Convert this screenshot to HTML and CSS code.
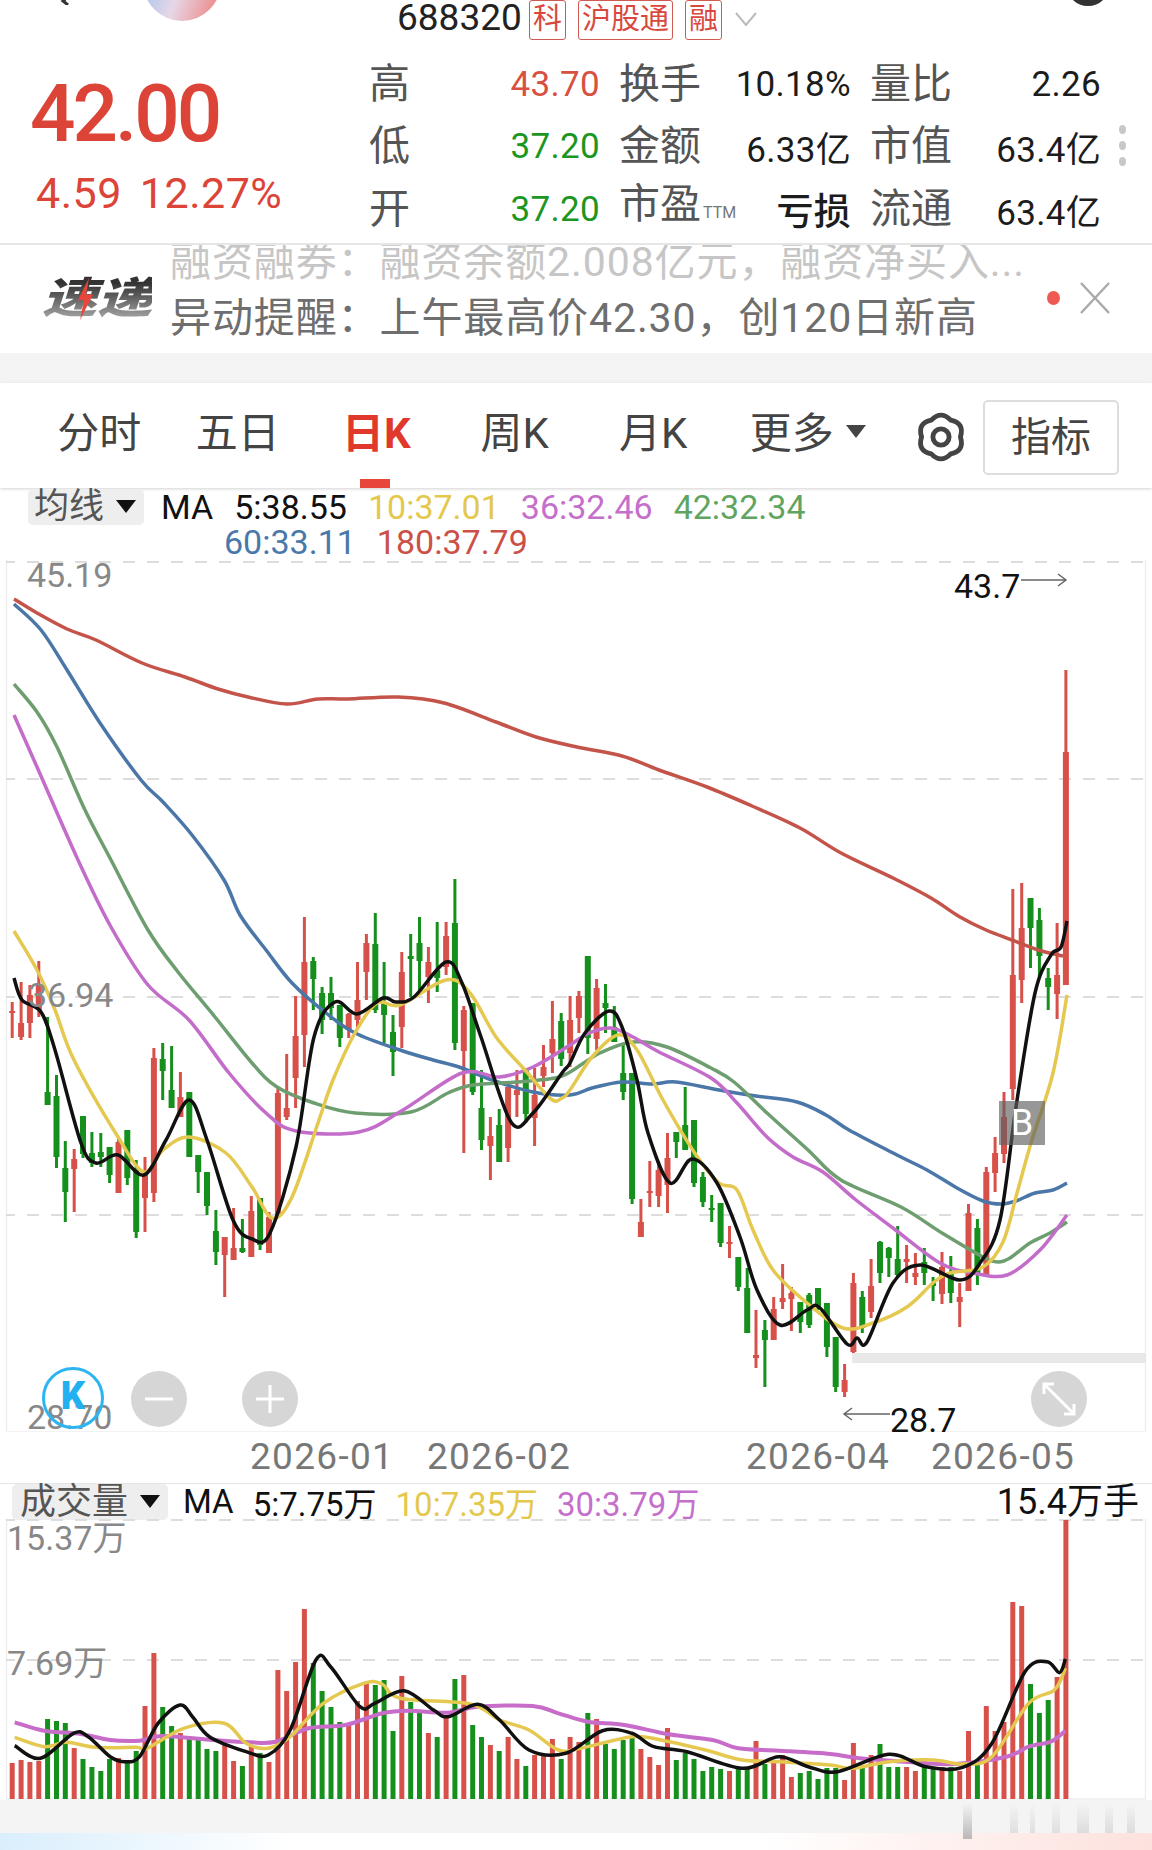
FILE: index.html
```html
<!DOCTYPE html>
<html lang="zh-CN">
<head>
<meta charset="utf-8">
<title>688320</title>
<link rel="stylesheet" href="styles.css">
</head>
<body>
<div id="page">

    <!-- top bar, cut by the edge of the picture -->
    <div class="topbar">
        <svg class="back" width="18" height="6" viewBox="0 0 18 6"><path d="M15 -8L3 2l5 4" fill="none" stroke="#333" stroke-width="3"/></svg>
        <div class="avatar"></div>
        <span class="code">688320</span>
        <span class="tag">科</span>
        <span class="tag">沪股通</span>
        <span class="tag">融</span>
        <svg class="chevron" width="24" height="14" viewBox="0 0 24 14"><path d="M2 1l10 12L22 1" fill="none" stroke="#bbb" stroke-width="2"/></svg>
        <div class="search"></div>
    </div>

    <div class="quote">
        <div class="price">
            <div class="last">42.00</div>
            <div class="change"><span>4.59</span><span>12.27%</span></div>
        </div>
        <div class="stats">
            <div class="stat"><span class="label">高</span><span class="val up">43.70</span></div>
            <div class="stat"><span class="label">换手</span><span class="val">10.18%</span></div>
            <div class="stat"><span class="label">量比</span><span class="val">2.26</span></div>
            <div class="stat"><span class="label">低</span><span class="val down">37.20</span></div>
            <div class="stat"><span class="label">金额</span><span class="val">6.33亿</span></div>
            <div class="stat"><span class="label">市值</span><span class="val">63.4亿</span></div>
            <div class="stat"><span class="label">开</span><span class="val down">37.20</span></div>
            <div class="stat"><span class="label">市盈<small>TTM</small></span><span class="val loss">亏损</span></div>
            <div class="stat"><span class="label">流通</span><span class="val">63.4亿</span></div>
        </div>
        <div class="dots"><i></i><i></i><i></i></div>
    </div>

    <div class="ticker">
        <div class="logo">
            <span>速递</span>
            <svg class="bolt" width="20" height="42" viewBox="0 0 20 46" preserveAspectRatio="none"><path d="M14 0L3 24h6L5 46l13-28h-7z" fill="#e8463a"/></svg>
        </div>
        <div class="news">
            <div class="news-old">融资融券：融资余额2.008亿元，融资净买入...</div>
            <div class="news-new">异动提醒：上午最高价42.30，创120日新高</div>
        </div>
        <i class="red-dot"></i>
        <svg class="close" width="32" height="32" viewBox="0 0 32 32"><path d="M2 1l28 30M30 1L2 31" fill="none" stroke="#aaa" stroke-width="2.5"/></svg>
    </div>

    <div class="gap"></div>

    <div class="tabs">
        <div class="tab">分时</div>
        <div class="tab">五日</div>
        <div class="tab active">日K</div>
        <div class="tab">周K</div>
        <div class="tab">月K</div>
        <div class="tab">更多<i class="caret"></i></div>
        <svg class="gear" width="54" height="54" viewBox="0 0 50 50">
            <path d="M16 9.4Q25 0 34 9.4Q47 12 43 25Q47 38 34 40.6Q25 50 16 40.6Q3 38 7 25Q3 12 16 9.4z" fill="none" stroke="#444" stroke-width="4.5" stroke-linejoin="round"/>
            <circle cx="25" cy="25" r="7.5" fill="none" stroke="#444" stroke-width="4.5"/>
        </svg>
        <div class="btn">指标</div>
    </div>

    <!-- price chart -->
    <div class="panel">
        <div class="legend">
            <div class="legend-row">
                <span class="chip">均线<i class="caret black"></i></span>
                <span>MA</span>
                <span>5:38.55</span>
                <span class="c-gold">10:37.01</span>
                <span class="c-purple">36:32.46</span>
                <span class="c-green">42:32.34</span>
            </div>
            <div class="legend-row second">
                <span class="c-blue">60:33.11</span>
                <span class="c-red">180:37.79</span>
            </div>
        </div>
        <svg id="kline" width="1152" height="872" viewBox="0 560 1152 872"></svg>

        <span class="ylabel y1">45.19</span>
        <span class="ylabel y2">36.94</span>
        <span class="ylabel y3">28.70</span>
        <span class="mark m1">43.7</span>
        <span class="mark m2">28.7</span>
        <span class="badge">B</span>

        <div class="kbtn">K</div>
        <div class="round minus"><svg width="28" height="4" viewBox="0 0 28 4"><path d="M0 2h28" stroke="#fff" stroke-width="3"/></svg></div>
        <div class="round plus"><svg width="28" height="28" viewBox="0 0 28 28"><path d="M0 14h28M14 0v28" stroke="#fff" stroke-width="3"/></svg></div>
        <div class="round expand"><svg width="34" height="34" viewBox="0 0 34 34"><path d="M2 12V2h10M2 2l30 30M32 22v10H22" fill="none" stroke="#fff" stroke-width="3"/></svg></div>
    </div>

    <div class="axis">
        <span>2026-01</span>
        <span>2026-02</span>
        <span>2026-04</span>
        <span>2026-05</span>
    </div>

    <!-- volume chart -->
    <div class="panel vol">
        <div class="legend-row vol-row">
            <span class="chip">成交量<i class="caret black"></i></span>
            <span>MA</span>
            <span>5:7.75万</span>
            <span class="c-gold">10:7.35万</span>
            <span class="c-purple">30:3.79万</span>
            <span class="vol-now">15.4万手</span>
        </div>
        <svg id="volume" width="1152" height="281" viewBox="0 1519 1152 281"></svg>
        <span class="ylabel y4">15.37万</span>
        <span class="ylabel y5">7.69万</span>
    </div>

    <div class="bottom-gap">
        <svg class="mark-faint" width="190" height="36" viewBox="0 0 190 36">
            <defs>
                <linearGradient id="fade" x1="0" y1="0" x2="0" y2="1">
                    <stop offset="0" stop-color="#aaa" stop-opacity="0"/>
                    <stop offset="1" stop-color="#aaa" stop-opacity=".8"/>
                </linearGradient>
            </defs>
            <rect x="8" y="0" width="9" height="36" fill="url(#fade)"/>
            <rect x="55" y="0" width="8" height="30" fill="url(#fade)" opacity=".35"/>
            <rect x="75" y="0" width="5" height="30" fill="url(#fade)" opacity=".35"/>
            <rect x="97" y="0" width="8" height="30" fill="url(#fade)" opacity=".35"/>
            <rect x="122" y="0" width="12" height="30" fill="url(#fade)" opacity=".4"/>
            <rect x="150" y="0" width="8" height="30" fill="url(#fade)" opacity=".4"/>
            <rect x="172" y="0" width="8" height="30" fill="url(#fade)" opacity=".4"/>
        </svg>
    </div>
    <div class="bottom-bar"></div>
</div>
<script src="chart.js"></script>
</body>
</html>
```
FILE: styles.css
```css
* {
    margin: 0;
    padding: 0;
    box-sizing: border-box;
}

body {
    background: #fff;
    font-family: Roboto, "Noto Sans CJK SC", sans-serif;
}

#page {
    width: 1152px;
    height: 1850px;
    overflow: hidden;
    background: #fff;
}

/* top bar */
.topbar {
    display: flex;
    align-items: flex-end;
    height: 40px;
    position: relative;
}

.back {
    margin-left: 60px;
    margin-bottom: 35px;
}

.avatar {
    width: 78px;
    height: 78px;
    margin-left: 65px;
    margin-bottom: 19px;
    flex: none;
    border-radius: 50%;
    background: linear-gradient(110deg, #9fc4ee 10%, #e7d6e6 50%, #eb8e8e 90%);
}

.code {
    margin-left: 176px;
    width: 132px;
    font-size: 37px;
    line-height: 34px;
    margin-bottom: 5px;
    color: #222;
}

.tag {
    height: 40px;
    padding: 0 3px;
    margin-right: 12px;
    border: 1px solid #cf5a52;
    border-radius: 3px;
    color: #d8483e;
    font-size: 29px;
    line-height: 36px;
}

.chevron {
    margin-bottom: 14px;
}

.search {
    position: absolute;
    right: 42px;
    top: -38px;
    width: 44px;
    height: 44px;
    border: 6px solid #333;
    border-radius: 50%;
}

/* quote block */
.quote {
    display: flex;
    height: 205px;
    border-bottom: 2px solid #e6e6e6;
}

.price {
    width: 371px;
    padding: 29px 0 0 30px;
    color: #dc4437;
}

.last {
    font-size: 80px;
    font-weight: 500;
    line-height: 90px;
    letter-spacing: -3px;
}

.change {
    display: flex;
    gap: 18px;
    padding-left: 6px;
    margin-top: 9px;
    font-size: 43px;
    line-height: 50px;
    letter-spacing: .5px;
}

.stats {
    display: grid;
    grid-template-columns: 229px 230px 229px;
    grid-auto-rows: 62.5px;
    column-gap: 21px;
    padding-top: 13px;
}

.stat {
    display: flex;
    justify-content: space-between;
    align-items: center;
}

.label {
    font-size: 41px;
    line-height: 50px;
    margin: 0 0 1px -2px;
    color: #555;
    white-space: nowrap;
}

.label small {
    font-size: 16px;
    margin-left: 2px;
    color: #777;
}

.val {
    font-size: 35px;
    letter-spacing: .3px;
    color: #1c1c1c;
    white-space: nowrap;
}

.val.up {
    color: #d8503f;
}

.val.down {
    color: #1c961f;
}

.val.loss {
    font-size: 37px;
    font-weight: 500;
}

.dots {
    display: flex;
    flex-direction: column;
    gap: 7px;
    margin: 85px 0 0 18px;
}

.dots i {
    display: block;
    width: 7px;
    height: 9px;
    border-radius: 50%;
    background: #c8c8c8;
}

/* news ticker */
.ticker {
    display: flex;
    align-items: center;
    height: 108px;
    overflow: hidden;
}

.logo {
    position: relative;
    width: 168px;
    height: 54px;
    padding-left: 42px;
    flex: none;
}

.logo span {
    display: inline-block;
    font-size: 50px;
    font-weight: 900;
    font-style: italic;
    line-height: 54px;
    white-space: nowrap;
    color: transparent;
    background: linear-gradient(#333 15%, #999 85%);
    background-clip: text;
    -webkit-background-clip: text;
    transform: scale(1.1, .85);
    transform-origin: left center;
}

.bolt {
    position: absolute;
    left: 75px;
    top: 6px;
}

.news {
    width: 879px;
    margin-left: 2px;
    margin-top: -19px;
    font-size: 41px;
    line-height: 56px;
    letter-spacing: .9px;
    white-space: nowrap;
}

.news-old {
    color: #c6c6c6;
}

.news-new {
    color: #6e6e6e;
}

.red-dot {
    width: 13px;
    height: 14px;
    margin-top: -3px;
    margin-left: -2px;
    border-radius: 50%;
    background: #ee5a52;
    flex: none;
}

.close {
    margin: -2px 0 0 19px;
}

.gap {
    height: 30px;
    background: #f4f4f4;
}

/* tabs */
.tabs {
    display: flex;
    align-items: center;
    height: 105px;
    padding-left: 30px;
    box-shadow: 0 1px 3px rgba(0, 0, 0, .18);
    position: relative;
}

.tab {
    width: 138.5px;
    padding-bottom: 13px;
    text-align: center;
    font-size: 42px;
    color: #444;
    white-space: nowrap;
}

.tab.active {
    color: #e0392b;
    font-weight: 700;
    position: relative;
}

.tab.active::after {
    content: "";
    position: absolute;
    left: 53px;
    bottom: -15.5px;
    width: 30px;
    height: 9px;
    background: #e8463a;
}

.caret {
    display: inline-block;
    width: 0;
    height: 0;
    margin-left: 12px;
    margin-right: -32px;
    border-left: 10px solid transparent;
    border-right: 10px solid transparent;
    border-top: 13px solid #444;
    vertical-align: 10px;
}

.caret.black {
    margin-right: 0;
    border-top-color: #111;
    vertical-align: 3px;
}

.gear {
    margin-left: 53px;
    margin-top: 3px;
    flex: none;
}

.btn {
    width: 136px;
    height: 75px;
    margin-left: 15px;
    margin-top: 3px;
    border: 2px solid #ddd;
    border-radius: 5px;
    text-align: center;
    font-size: 40px;
    line-height: 71px;
    color: #444;
    flex: none;
}

/* chart panels, svg viewBox is in page pixels */
.panel {
    position: relative;
    height: 944px;
}

.panel svg {
    display: block;
}

.legend {
    height: 72px;
    padding-top: 1px;
}

.legend-row {
    display: flex;
    align-items: center;
    gap: 21px;
    height: 35px;
    padding-left: 28px;
    font-size: 34px;
    color: #111;
    white-space: nowrap;
}

.legend-row.second {
    padding-left: 224px;
}

.chip {
    display: flex;
    align-items: center;
    height: 36px;
    padding: 0 8px 0 6px;
    margin-right: -4px;
    border-radius: 5px;
    background: #eee;
    font-size: 35px;
    line-height: 36px;
    color: #555;
}

.c-gold { color: #e4c84e; }
.c-purple { color: #c56fcc; }
.c-green { color: #5fa55f; }
.c-blue { color: #4a78aa; }
.c-red { color: #cb5148; }

.ylabel {
    position: absolute;
    font-size: 34px;
    line-height: 34px;
    color: #888;
    white-space: nowrap;
}

.y1 { left: 27px; top: 70px; }
.y2 { left: 28px; top: 490px; }
.y3 { left: 27px; top: 912px; }

.mark {
    position: absolute;
    font-size: 34px;
    line-height: 34px;
    color: #111;
}

.m1 { left: 954px; top: 81px; }
.m2 { left: 890px; top: 915px; }

.badge {
    position: absolute;
    left: 999px;
    top: 613px;
    width: 46px;
    height: 44px;
    background: rgba(95, 95, 95, .65);
    color: #fff;
    font-size: 36px;
    line-height: 44px;
    text-align: center;
}

.kbtn {
    position: absolute;
    left: 42px;
    top: 879px;
    width: 62px;
    height: 62px;
    border: 3px solid #2cb5f0;
    border-radius: 50%;
    color: #22b0f0;
    font-size: 38px;
    font-weight: 900;
    line-height: 52px;
    text-align: center;
}

.round {
    position: absolute;
    top: 883px;
    width: 56px;
    height: 56px;
    border-radius: 50%;
    background: #d6d6d6;
    display: flex;
    align-items: center;
    justify-content: center;
}

.minus { left: 131px; }
.plus { left: 242px; }
.expand { left: 1031px; }

.axis {
    display: grid;
    grid-template-columns: 177px 319px 185px auto;
    height: 51px;
    padding-left: 250px;
    font-size: 37px;
    line-height: 50px;
    letter-spacing: 1.3px;
    color: #777;
}

.panel.vol {
    height: 317px;
    border-top: 1px solid #e6e6e6;
}

.vol-row {
    padding-left: 12px;
    font-size: 33px;
    gap: 19px;
    height: 35px;
}

.vol-row .chip {
    font-size: 36px;
    padding: 0 8px;
}

.vol-now {
    position: absolute;
    right: 13px;
    top: 0;
    font-size: 36px;
    line-height: 36px;
}

.y4 { left: 7px; top: 37px; }
.y5 { left: 7px; top: 162px; }

.bottom-gap {
    position: relative;
    height: 33px;
    background: #f4f4f4;
}

.mark-faint {
    position: absolute;
    left: 955px;
    top: 3px;
}

.bottom-bar {
    height: 17px;
    background: linear-gradient(90deg, #d9eefc, #fff 25%, #fff 66%, #fde1dd);
}
```
FILE: chart.js
```js
// each candle: colour, wick top, body top, body bottom, wick bottom, all in page pixels
var candles = [
    ['r',1002,1011,1013,1038],['r',982,1023,1037,1040],['r',985,995,1023,1038],['r',961,985,1010,1017],
    ['g',1017,1092,1105,1105],['g',1075,1096,1157,1168],['g',1141,1168,1192,1222],['r',1149,1159,1169,1212],
    ['g',1116,1116,1154,1158],['g',1132,1153,1163,1167],['g',1133,1152,1157,1167],['g',1147,1147,1175,1183],
    ['r',1137,1142,1193,1193],['g',1130,1130,1178,1185],['g',1160,1170,1232,1238],['r',1157,1175,1198,1232],
    ['r',1048,1058,1193,1202],['g',1043,1059,1071,1100],['g',1046,1090,1108,1108],['r',1072,1097,1117,1117],
    ['g',1092,1092,1157,1157],['g',1155,1155,1172,1193],['g',1172,1172,1206,1215],['g',1210,1231,1252,1265],
    ['r',1237,1237,1255,1297],['r',1208,1248,1260,1260],['g',1219,1248,1252,1253],['r',1196,1211,1257,1257],
    ['g',1198,1198,1245,1250],['r',1212,1217,1253,1253],['r',1087,1093,1215,1217],['r',1054,1108,1117,1120],
    ['r',996,1036,1078,1108],['r',917,962,1035,1067],['g',957,961,979,1010],['g',987,993,1020,1034],
    ['g',977,993,1008,1020],['g',1005,1005,1038,1047],['r',1013,1014,1030,1038],['r',962,1000,1020,1028],
    ['r',934,943,972,1000],['g',913,944,1010,1013],['g',962,1002,1015,1043],['g',1015,1032,1052,1076],
    ['r',952,972,1027,1048],['g',934,956,959,997],['g',917,943,961,992],['r',947,962,977,1003],
    ['g',922,970,978,992],['r',922,936,967,975],['g',879,923,1043,1050],['r',1006,1010,1051,1153],
    ['g',1003,1003,1092,1095],['g',1070,1108,1140,1150],['r',1117,1136,1146,1180],['g',1109,1125,1162,1162],
    ['r',1087,1087,1148,1162],['r',1070,1090,1095,1117],['g',1068,1068,1114,1123],['r',1068,1095,1118,1146],
    ['r',1045,1067,1076,1087],['r',1001,1039,1053,1073],['g',1013,1021,1059,1066],['r',996,1020,1053,1067],
    ['r',991,996,1018,1033],['g',956,956,1038,1054],['r',979,988,1039,1050],['g',984,1003,1008,1033],
    ['g',1006,1027,1042,1042],['g',1045,1073,1092,1100],['g',1073,1073,1199,1204],['r',1199,1222,1237,1237],
    ['r',1161,1191,1193,1207],['r',1161,1170,1196,1207],['r',1133,1158,1185,1213],['g',1132,1132,1142,1158],
    ['g',1087,1125,1150,1150],['g',1120,1120,1183,1187],['g',1172,1177,1202,1207],['g',1195,1208,1209,1222],
    ['g',1203,1203,1243,1247],['r',1226,1242,1243,1258],['g',1257,1257,1287,1291],['g',1268,1288,1333,1333],
    ['r',1310,1355,1358,1368],['g',1320,1330,1340,1387],['r',1297,1309,1340,1340],['r',1264,1298,1302,1309],
    ['r',1287,1293,1299,1331],['g',1302,1302,1322,1333],['g',1293,1295,1325,1328],['g',1288,1288,1307,1310],
    ['g',1303,1303,1347,1357],['g',1337,1337,1387,1392],['r',1364,1380,1392,1397],['r',1273,1283,1352,1353],
    ['g',1291,1297,1328,1333],['r',1259,1286,1312,1318],['g',1241,1242,1273,1283],['g',1247,1248,1258,1277],
    ['g',1226,1259,1275,1277],['r',1245,1259,1262,1283],['r',1253,1273,1277,1285],['g',1248,1262,1273,1285],
    ['g',1277,1283,1286,1301],['r',1252,1267,1294,1304],['g',1256,1273,1293,1303],['r',1283,1297,1302,1327],
    ['r',1204,1213,1291,1291],['g',1219,1228,1275,1285],['r',1167,1172,1275,1275],['r',1137,1153,1173,1192],
    ['r',1092,1117,1154,1163],['r',889,975,1089,1100],['r',883,928,980,1003],['g',898,898,928,968],
    ['g',908,920,956,977],['g',968,978,987,1010],['r',923,975,994,1019],['r',670,752,985,985]
];

// top of every volume bar
var volTops = [
    1763,1760,1762,1761,1719,1721,1723,1748,1759,1767,1771,1759,1758,1760,1751,1706,1653,1707,1726,1733,
    1739,1740,1749,1751,1744,1761,1766,1745,1753,1762,1670,1691,1662,1609,1663,1691,1707,1722,1723,1701,
    1682,1685,1680,1731,1676,1702,1710,1733,1737,1715,1679,1675,1725,1737,1745,1751,1737,1759,1766,1755,
    1756,1739,1759,1737,1742,1713,1719,1744,1749,1740,1737,1749,1757,1765,1728,1760,1753,1759,1771,1767,
    1769,1771,1769,1769,1741,1764,1760,1755,1777,1773,1771,1779,1768,1768,1780,1743,1767,1755,1744,1767,
    1767,1767,1771,1767,1767,1767,1767,1771,1731,1760,1706,1731,1722,1602,1606,1684,1713,1700,1677,1520
];

var lines = {
    red: [14,599,37,613,67,629,96,640,142,663,185,677,218,689,248,697,287,704,318,699,348,699,398,697,444,703,496,722,536,737,577,747,622,756,659,770,707,787,752,806,800,828,841,853,893,878,931,898,960,917,986,930,1012,940,1038,950,1063,956],
    blue: [14,604,41,630,67,670,100,723,141,780,163,802,192,835,224,880,240,915,266,950,292,983,326,1013,355,1033,400,1050,433,1060,459,1067,492,1080,533,1092,570,1095,592,1088,622,1082,652,1084,676,1082,719,1090,756,1096,797,1102,826,1115,849,1130,897,1155,927,1170,957,1188,983,1201,1001,1204,1016,1201,1035,1193,1053,1190,1067,1183],
    green: [14,684,37,712,57,747,85,810,111,860,148,930,178,972,215,1017,252,1063,277,1087,314,1103,355,1113,411,1112,448,1093,473,1085,518,1082,555,1078,570,1072,600,1053,633,1042,667,1047,711,1068,734,1082,767,1113,808,1150,841,1180,901,1207,942,1233,983,1257,998,1262,1010,1258,1030,1243,1050,1233,1067,1222],
    purple: [14,715,37,767,78,860,111,927,148,985,189,1020,229,1073,266,1113,296,1131,359,1132,403,1110,462,1073,499,1077,533,1067,570,1045,589,1033,611,1028,633,1037,659,1052,711,1078,737,1103,767,1137,793,1157,823,1172,856,1200,893,1228,940,1263,973,1273,1007,1275,1040,1250,1067,1215],
    gold: [14,931,37,970,55,1010,74,1060,118,1137,144,1172,163,1150,189,1137,226,1153,252,1187,272,1218,292,1197,318,1123,333,1080,355,1033,377,1003,400,1005,446,980,470,993,496,1037,525,1070,551,1099,562,1098,570,1090,592,1057,618,1035,637,1050,663,1100,696,1155,719,1183,737,1190,753,1230,773,1270,807,1303,843,1328,873,1323,907,1307,933,1283,950,1273,983,1267,1003,1242,1017,1193,1031,1143,1053,1073,1067,995],
    black: [14,978,22,1000,41,1012,55,1050,81,1143,96,1163,118,1155,144,1175,166,1140,189,1100,207,1140,233,1220,252,1239,270,1233,296,1147,314,1037,335,1002,357,1014,383,998,396,1002,414,997,446,962,462,983,481,1037,511,1122,533,1113,562,1073,570,1063,585,1033,609,1011,622,1027,637,1080,648,1133,670,1183,692,1159,717,1183,740,1237,757,1290,780,1325,807,1310,820,1308,847,1344,857,1338,867,1342,893,1283,920,1265,960,1280,980,1263,1000,1220,1016,1107,1035,993,1051,955,1061,947,1067,921]
};

// volume lines are read in zoomed px, (x/1.361, 1540+y/3)
var volPurple = [20,547,60,572,110,582,150,600,190,602,220,588,290,600,340,607,375,605,420,565,470,555,520,520,555,512,610,518,650,500,725,498,760,520,800,545,850,555,910,583,970,600,1005,625,1060,632,1130,642,1170,655,1250,668,1300,672,1370,650,1400,620,1430,605,1450,572];
var volGold = [20,592,60,620,90,607,130,622,185,622,200,625,250,565,305,550,335,610,365,625,395,590,440,490,495,430,520,432,545,475,640,492,680,540,720,570,760,630,790,625,860,590,900,600,960,630,1010,660,1060,665,1130,675,1160,685,1210,665,1270,660,1310,672,1350,650,1400,490,1435,450,1450,385];
var volBlack = [20,617,55,655,100,580,120,590,150,650,170,665,190,650,215,550,245,495,262,530,285,590,335,635,365,645,395,570,430,360,450,380,490,500,510,490,550,452,590,510,610,530,650,493,680,540,720,630,770,640,820,572,860,580,890,620,935,635,1010,685,1060,650,1100,680,1140,695,1210,643,1260,680,1310,682,1350,610,1395,395,1425,365,1442,398,1450,357];

var RED = '#d8504a';
var GREEN = '#16901c';

function candleX(i) {
    return 12.2 + 8.855 * i;
}

function fromZoom(arr) {
    var out = [];
    for (var i = 0; i < arr.length; i += 2) {
        out.push(arr[i] / 1.361, 1540 + arr[i + 1] / 3);
    }
    return out;
}

// catmull-rom through the points
function smooth(p) {
    var d = 'M' + p[0] + ' ' + p[1];
    for (var i = 0; i < p.length - 2; i += 2) {
        var x0 = i > 0 ? p[i - 2] : p[i], y0 = i > 0 ? p[i - 1] : p[i + 1];
        var x1 = p[i], y1 = p[i + 1], x2 = p[i + 2], y2 = p[i + 3];
        var x3 = i + 4 < p.length ? p[i + 4] : x2, y3 = i + 4 < p.length ? p[i + 5] : y2;
        d += 'C' + (x1 + (x2 - x0) / 6).toFixed(1) + ' ' + (y1 + (y2 - y0) / 6).toFixed(1) + ' ' +
            (x2 - (x3 - x1) / 6).toFixed(1) + ' ' + (y2 - (y3 - y1) / 6).toFixed(1) + ' ' + x2.toFixed(1) + ' ' + y2.toFixed(1);
    }
    return d;
}

function rect(x, y, w, h, fill) {
    return '<rect x="' + x.toFixed(1) + '" y="' + y + '" width="' + w + '" height="' + Math.max(h, 2) + '" fill="' + fill + '"/>';
}

function line(p, color, w) {
    return '<path d="' + smooth(p) + '" fill="none" stroke="' + color + '" stroke-width="' + w + '" stroke-linejoin="round"/>';
}

function dashed(y) {
    return '<line x1="6" x2="1145" y1="' + y + '" y2="' + y + '" stroke="#ddd" stroke-width="2" stroke-dasharray="12 12" stroke-dashoffset="3"/>';
}

function frame(top, bottom) {
    return '<path d="M6.5 ' + top + 'V' + bottom + 'H1145.5V' + top + '" fill="none" stroke="#eee" stroke-width="1.5"/>';
}

var html = frame(560, 1432);
[562, 779, 997, 1215].forEach(function (y) { html += dashed(y); });
html += rect(852, 1353, 294, 10, '#e8e8e8');

candles.forEach(function (c, i) {
    var x = candleX(i), col = c[0] === 'r' ? RED : GREEN;
    html += rect(x - 1.5, c[1], 3, c[4] - c[1], col);
    html += rect(x - 3, c[2], 6, c[3] - c[2], col);
});

html += line(lines.red, '#c4534a', 3.5);
html += line(lines.blue, '#4a76a8', 3.5);
html += line(lines.green, '#6e9e70', 3.5);
html += line(lines.purple, '#c36cc9', 3.5);
html += line(lines.gold, '#e5c84f', 3.5);
html += line(lines.black, '#111', 3.5);

// high and low arrows
html += '<path d="M1021 580H1066M1058 574L1066 580L1058 586" fill="none" stroke="#666" stroke-width="1.5"/>';
html += '<path d="M890 1414H844M852 1408L844 1414L852 1420" fill="none" stroke="#666" stroke-width="1.5"/>';
document.getElementById('kline').innerHTML = html;

var vhtml = frame(1519, 1799);
[1520, 1660].forEach(function (y) { vhtml += dashed(y); });
volTops.forEach(function (t, i) {
    vhtml += rect(candleX(i) - 2.5, t, 5, 1799 - t, candles[i][0] === 'r' ? RED : GREEN);
});
vhtml += line(fromZoom(volPurple), '#c76cc9', 4);
vhtml += line(fromZoom(volGold), '#e5c84f', 3.5);
vhtml += line(fromZoom(volBlack), '#111', 3.5);
document.getElementById('volume').innerHTML = vhtml;
```
